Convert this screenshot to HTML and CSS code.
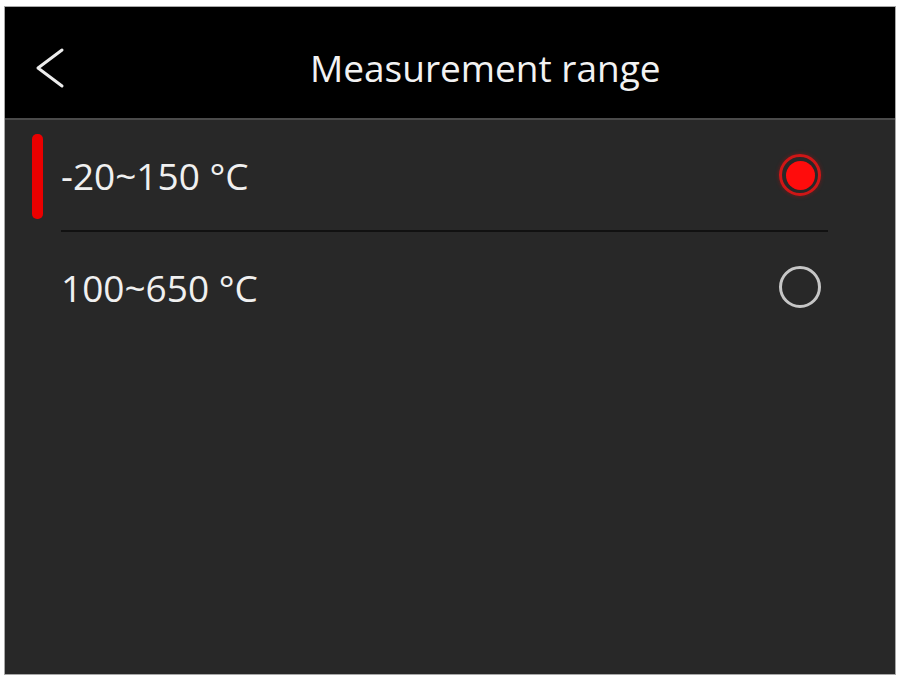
FILE: index.html
```html
<!DOCTYPE html>
<html lang="en">
<head>
<meta charset="utf-8">
<title>Measurement range</title>
<link rel="stylesheet" href="styles.css">
</head>
<body>
<div class="screen">
  <header class="topbar">
    <svg class="back" width="30" height="44" viewBox="0 0 30 44" aria-hidden="true">
      <path d="M27 4 L3 22 L27 40" fill="none" stroke="#ececec" stroke-width="3" stroke-linecap="round" stroke-linejoin="round"/>
    </svg>
    <h1 class="title">Measurement range</h1>
  </header>
  <ul class="options">
    <li class="option selected">
      <span class="marker"></span>
      <div class="option-body">
        <span class="label">-20~150 °C</span>
        <span class="radio on"><span class="dot"></span></span>
      </div>
    </li>
    <li class="option">
      <span class="marker"></span>
      <div class="option-body">
        <span class="label">100~650 °C</span>
        <span class="radio"></span>
      </div>
    </li>
  </ul>
</div>
</body>
</html>
```

FILE: styles.css
```css
* { box-sizing: border-box; }
html, body {
  margin: 0;
  padding: 0;
  background: #ffffff;
}
body {
  font-family: "Open Sans", "Noto Sans", "DejaVu Sans", sans-serif;
  padding: 6px 2px 0 4px;
}
.screen {
  width: 892px;
  height: 669px;
  background: #282828;
  border: 1px solid #a8a8a8;
  display: flex;
  flex-direction: column;
}
.topbar {
  height: 113px;
  background: #000;
  border-bottom: 2px solid #4a4a4a;
  display: flex;
  align-items: flex-start;
  padding-left: 30px;
  flex-shrink: 0;
}
.back {
  margin-top: 39px;
  display: block;
}
.title {
  margin: 36px 0 0 245px;
  font-weight: 400;
  font-size: 37px;
  line-height: 50px;
  color: #f2f2f2;
  letter-spacing: 0;
}
.options {
  list-style: none;
  margin: 0;
  padding: 0 67px 0 27px;
}
.option {
  display: flex;
  align-items: center;
  gap: 18px;
}
.marker {
  width: 11px;
  height: 85px;
  border-radius: 5px;
  flex-shrink: 0;
  background: transparent;
}
.option.selected .marker {
  background: #ea0000;
}
.option-body {
  flex: 1;
  height: 112px;
  display: flex;
  align-items: center;
  justify-content: space-between;
  border-bottom: 2px solid #111111;
  padding-right: 7px;
}
.option:last-child .option-body {
  border-bottom-color: transparent;
}
.label {
  font-size: 37px;
  color: #f0f0f0;
  line-height: 40px;
  padding-top: 2px;
}
.radio {
  width: 42px;
  height: 42px;
  border-radius: 50%;
  border: 3px solid #c6c6c6;
  display: flex;
  align-items: center;
  justify-content: center;
}
.radio.on {
  border-color: #cf1616;
  box-shadow: 0 0 4px rgba(255, 0, 0, 0.35);
}
.dot {
  width: 29px;
  height: 29px;
  border-radius: 50%;
  background: #ff0c0c;
}
```
